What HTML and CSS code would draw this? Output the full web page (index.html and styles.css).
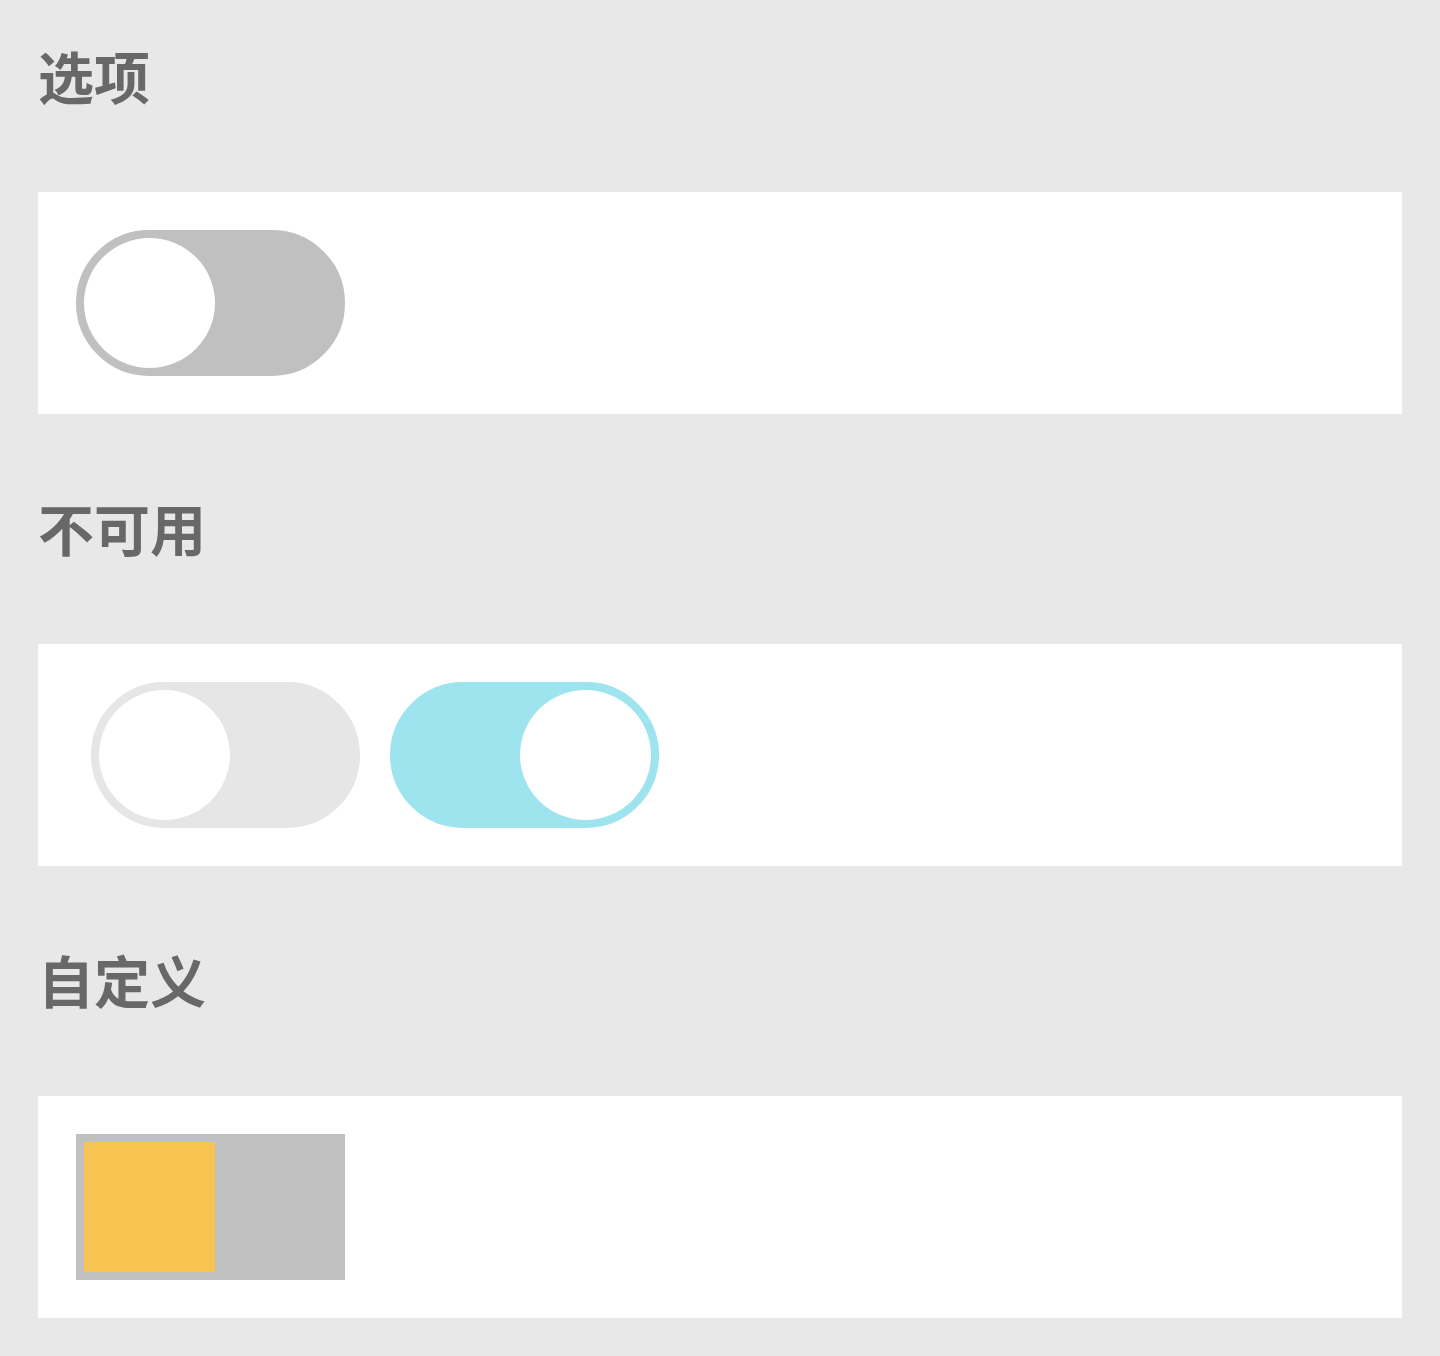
FILE: index.html
```html
<!DOCTYPE html>
<html lang="zh-CN">
<head>
<meta charset="utf-8">
<title>Switch</title>
<link rel="stylesheet" href="styles.css">
</head>
<body>
<div class="page">
  <h2 class="title">选项</h2>
  <div class="card">
    <span class="switch"><span class="knob"></span></span>
  </div>

  <h2 class="title">不可用</h2>
  <div class="card card-disabled">
    <span class="switch switch-disabled"><span class="knob"></span></span>
    <span class="switch switch-disabled switch-checked"><span class="knob"></span></span>
  </div>

  <h2 class="title">自定义</h2>
  <div class="card">
    <span class="switch switch-square"><span class="knob"></span></span>
  </div>
</div>
</body>
</html>
```
FILE: styles.css
```css
html, body {
  margin: 0;
  padding: 0;
  background: #e8e8e8;
}
.page {
  padding: 47px 38px 38px;
  font-family: "Noto Sans CJK SC", "Noto Sans", sans-serif;
}
.title {
  margin: 0 0 89px 0;
  font-size: 56px;
  line-height: 56px;
  height: 56px;
  font-weight: 600;
  color: #686868;
}
.card {
  background: #fff;
  height: 222px;
  box-sizing: border-box;
  padding: 38px;
  display: flex;
  align-items: center;
  gap: 30px;
  margin-bottom: 85px;
}
.card:last-child {
  margin-bottom: 0;
}
.card-disabled {
  padding-left: 53px;
}
.switch {
  position: relative;
  display: block;
  width: 269px;
  height: 146px;
  box-sizing: border-box;
  border: 8px solid #c0c0c0;
  background: #c0c0c0;
  border-radius: 73px;
  flex: none;
}
.knob {
  position: absolute;
  left: 0;
  top: 0;
  width: 131px;
  height: 130px;
  border-radius: 50%;
  background: #fff;
}
.switch-disabled {
  background: #e6e6e6;
  border-color: #e6e6e6;
}
.switch-checked {
  background: #9de4ef;
  border-color: #9de4ef;
}
.switch-checked .knob {
  left: auto;
  right: 0;
}
.switch-square {
  border-radius: 0;
}
.switch-square .knob {
  border-radius: 0;
  background: #f8c451;
}
```
